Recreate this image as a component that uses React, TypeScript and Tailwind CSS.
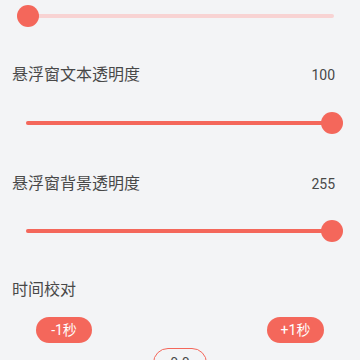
import React from 'react'

const accent = '#f4675b'

function Slider({ value, max, className = '' }: { value: number; max: number; className?: string }) {
  const pct = max ? value / max : 0
  return (
    <div className={`mx-[26px] h-[32px] shrink-0 flex items-center relative ${className}`}>
      <div className="w-full h-[4px] rounded-full bg-[#f8d3d3] relative">
        <div className="absolute left-0 top-0 h-full rounded-full bg-[#f4675b]" style={{ width: `${pct * 100}%` }} />
      </div>
      <div
        className="absolute top-1/2 -translate-y-1/2 w-[22px] h-[22px] rounded-full bg-[#f4675b]"
        style={{ left: `calc(${2 + pct * 304}px - 11px)` }}
      />
    </div>
  )
}

function Label({ text, value, className = '' }: { text: string; value?: string; className?: string }) {
  return (
    <div className={`h-[24px] shrink-0 pl-[12px] pr-[25px] flex items-center justify-between ${className}`}>
      <span className="text-[16px] text-[#484848]">{text}</span>
      {value && <span className="text-[14px] text-[#484848]">{value}</span>}
    </div>
  )
}

export default function App() {
  return (
    <div
      className="w-[360px] h-[360px] overflow-hidden bg-[#f3f4f6] flex flex-col"
      style={{ fontFamily: 'Roboto, "Noto Sans CJK SC", sans-serif' }}
    >
      <Slider value={0} max={255} />
      <Label text="悬浮窗文本透明度" value="100" className="mt-[31px]" />
      <Slider value={100} max={100} className="mt-[20px]" />
      <Label text="悬浮窗背景透明度" value="255" className="mt-[33px]" />
      <Slider value={255} max={255} className="mt-[19px]" />
      <Label text="时间校对" className="mt-[31px]" />

      <div className="mt-[15px] flex justify-between pl-[36px] pr-[36px] shrink-0">
        <button className="w-[56px] h-[26px] rounded-full bg-[#f4675b] text-white text-[14px] flex items-center justify-center">
          -1秒
        </button>
        <button className="w-[57px] h-[26px] rounded-full bg-[#f4675b] text-white text-[14px] flex items-center justify-center">
          +1秒
        </button>
      </div>

      <div className="mt-[5px] flex justify-center shrink-0">
        <div
          className="w-[54px] h-[30px] rounded-full border-[1.5px] flex items-center justify-center text-[14px] text-[#484848]"
          style={{ borderColor: accent }}
        >
          0.0
        </div>
      </div>
    </div>
  )
}
